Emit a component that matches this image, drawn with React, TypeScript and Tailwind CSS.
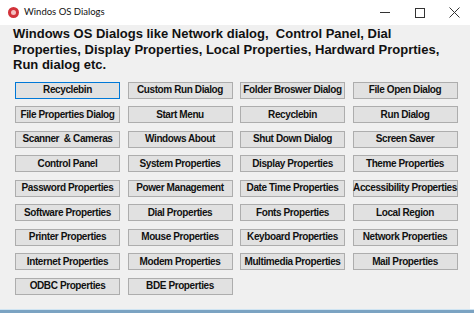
import React from "react";

const rows: string[][] = [
  ["Recyclebin", "Custom Run Dialog", "Folder Broswer Dialog", "File Open Dialog"],
  ["File Properties Dialog", "Start Menu", "Recyclebin", "Run Dialog"],
  ["Scanner  & Cameras", "Windows About", "Shut Down Dialog", "Screen Saver"],
  ["Control Panel", "System Properties", "Display Properties", "Theme Properties"],
  ["Password Properties", "Power Management", "Date Time Properties", "Accessibility Properties"],
  ["Software Properties", "Dial Properties", "Fonts Properties", "Local Region"],
  ["Printer Properties", "Mouse Properties", "Keyboard Properties", "Network Properties"],
  ["Internet Properties", "Modem Properties", "Multimedia Properties", "Mail Properties"],
  ["ODBC Properties", "BDE Properties"],
];

function DialogButton({ label, focused }: { label: string; focused?: boolean }) {
  return (
    <button
      type="button"
      className={
        "flex h-[17px] w-[105px] items-center justify-center whitespace-pre border bg-[#e1e1e1] text-[10px] font-bold leading-none tracking-[-0.4px] text-[#111] " +
        (focused ? "border-[#0078d7]" : "border-[#adadad]")
      }
      style={{ fontFamily: "'Liberation Sans', Arial, sans-serif" }}
    >
      {label}
    </button>
  );
}

export default function App() {
  return (
    <div className="flex h-[313px] w-[474px] flex-col overflow-hidden bg-white">
      <div className="flex h-[25px] items-center pl-[8px]">
        <div className="flex size-[11px] items-center justify-center rounded-full bg-[#d2333a]">
          <div className="size-[5px] rounded-full bg-[#f4c0c0]" />
        </div>
        <span
          className="ml-[5px] text-[9.5px] text-[#111]"
          style={{ fontFamily: "Lato, sans-serif" }}
        >
          Windos OS Dialogs
        </span>
        <div className="ml-auto flex items-center pr-[2px]">
          <div className="flex w-[35px] justify-center">
            <div className="h-px w-[10px] bg-[#333]" />
          </div>
          <div className="flex w-[35px] justify-center">
            <div className="size-[10px] border border-[#333]" />
          </div>
          <div className="flex w-[35px] justify-center text-[#333]">
            <svg width="11" height="11" viewBox="0 0 11 11">
              <path d="M0.5 0.5 L10.5 10.5 M10.5 0.5 L0.5 10.5" stroke="currentColor" strokeWidth="1" />
            </svg>
          </div>
        </div>
      </div>
      <div className="mr-[4px] flex flex-1 flex-col bg-[#f0f0f0]">
        <p
          className="whitespace-nowrap pl-[13px] pt-[1px] text-[13px] font-bold leading-[15.5px] text-[#111]"
          style={{ fontFamily: "'Liberation Sans', Arial, sans-serif" }}
        >
          Windows OS Dialogs like Network dialog,&nbsp; Control Panel, Dial
          <br />
          Properties, Display Properties, Local Properties, Hardward Proprties,
          <br />
          Run dialog etc.
        </p>
        <div className="mt-[9px] grid grid-cols-[105px_105px_105px_105px] gap-x-[7.5px] gap-y-[7.5px] pl-[15px]">
          {rows.flatMap((row, r) =>
            row.map((label, c) => (
              <DialogButton key={`${r}-${c}`} label={label} focused={r === 0 && c === 0} />
            ))
          )}
        </div>
      </div>
      <div className="h-[1px] bg-[#cfe4f2]" />
      <div className="h-[3px] bg-[#7ba3c2]" />
    </div>
  );
}
